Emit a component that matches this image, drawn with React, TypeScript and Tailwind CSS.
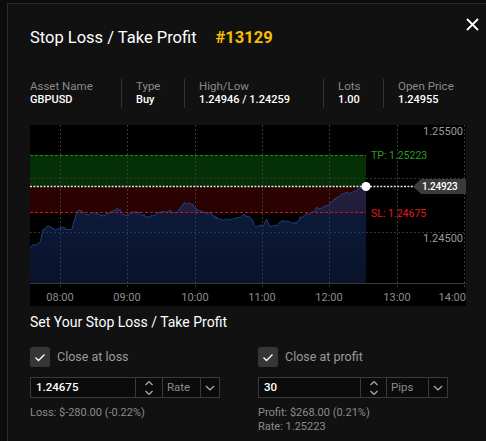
import React from "react";

const KEY: [number, number][] = [
  [30, 247], [40, 242], [43, 230], [47, 227], [52, 228], [57, 230], [62, 228], [67, 230], [72, 230],
  [74, 222], [77, 212], [80, 210], [83, 213], [87, 215], [93, 212], [97, 214], [103, 216], [107, 213],
  [113, 212], [117, 208], [120, 210], [123, 215], [127, 216], [130, 213], [137, 212], [143, 215],
  [150, 217], [157, 213], [163, 212], [170, 211], [177, 213], [182, 205], [187, 203], [193, 205],
  [197, 210], [203, 212], [210, 213], [217, 218], [223, 220], [233, 219], [240, 217], [245, 215],
  [250, 217], [253, 222], [257, 227], [263, 225], [267, 220], [270, 227], [277, 225], [283, 221],
  [290, 222], [297, 223], [300, 218], [307, 214], [313, 212], [317, 208], [323, 207], [327, 205],
  [330, 203], [337, 197], [343, 193], [350, 193], [357, 190], [363, 187], [366, 186],
];

function noise(i: number) {
  const v = Math.sin(i * 12.9898) * 43758.5453;
  return (v - Math.floor(v)) * 2 - 1;
}

function buildPoints() {
  const pts: [number, number][] = [];
  for (let k = 0; k < KEY.length - 1; k++) {
    const [x0, y0] = KEY[k];
    const [x1, y1] = KEY[k + 1];
    for (let x = x0; x < x1; x++) {
      const t = (x - x0) / (x1 - x0);
      const y = y0 + (y1 - y0) * t + noise(x) * 1.4;
      pts.push([x - 30, y - 125]);
    }
  }
  pts.push([336, 61.5]);
  return pts;
}

function Chart() {
  const pts = buildPoints();
  const line = pts.map((p, i) => `${i === 0 ? "M" : "L"}${p[0].toFixed(1)},${p[1].toFixed(1)}`).join(" ");
  const area = `${line} L336,158 L0,158 Z`;
  const vx = [30, 97, 165, 232, 299, 367, 434];
  const times = ["08:00", "09:00", "10:00", "11:00", "12:00", "13:00"];
  return (
    <div className="mt-[17px] h-[181px] w-[436px] bg-black">
      <svg width="436" height="181" viewBox="0 0 436 181" className="block">
        <defs>
          <linearGradient id="ag" x1="0" y1="0" x2="0" y2="1">
            <stop offset="0" stopColor="#1c3d80" stopOpacity="0.5" />
            <stop offset="1" stopColor="#163070" stopOpacity="0.38" />
          </linearGradient>
        </defs>
        <rect x="0" y="30" width="336" height="31.5" fill="#052f05" />
        <rect x="0" y="61.5" width="336" height="26" fill="#2a0202" />
        {vx.map((x) => (
          <line key={x} x1={x + 0.5} y1="0" x2={x + 0.5} y2="163" stroke="#3a3a3a" strokeWidth="1" strokeDasharray="2 2" />
        ))}
        <line x1="0" y1="53.5" x2="436" y2="53.5" stroke="#333" strokeDasharray="2 2" />
        <line x1="0" y1="107.5" x2="436" y2="107.5" stroke="#333" strokeDasharray="2 2" />
        <path d={area} fill="url(#ag)" />
        <path d={line} fill="none" stroke="#1f3f7e" strokeWidth="1" />
        <line x1="0" y1="30.5" x2="336" y2="30.5" stroke="#1d8a1d" strokeDasharray="3 2" />
        <line x1="0" y1="87.5" x2="336" y2="87.5" stroke="#cf1515" strokeDasharray="3 2" />
        <line x1="0" y1="61.5" x2="384" y2="61.5" stroke="#e6e6e6" strokeWidth="1.6" strokeDasharray="2 1.4" />
        <circle cx="336" cy="61.5" r="4.5" fill="#ffffff" />
        <polygon points="383,61.5 391,54 436,54 436,69 391,69" fill="#3b3b3b" />
        <text x="392" y="65.2" fill="#ffffff" fontSize="10" fontWeight="500" letterSpacing="-0.2">1.24923</text>
        <text x="341" y="34" fill="#2f9a22" fontSize="10.5">TP: 1.25223</text>
        <text x="341" y="91.5" fill="#e41d1d" fontSize="10.5">SL: 1.24675</text>
        <text x="433" y="10" fill="#9a9a9a" fontSize="11" textAnchor="end">1.25500</text>
        <text x="433" y="117" fill="#9a9a9a" fontSize="11" textAnchor="end">1.24500</text>
        <line x1="0" y1="158.5" x2="436" y2="158.5" stroke="#3a3a3a" />
        {times.map((t, i) => (
          <text key={t} x={vx[i]} y="176" fill="#8c8c8c" fontSize="11" textAnchor="middle">{t}</text>
        ))}
        <text x="436" y="176" fill="#8c8c8c" fontSize="11" textAnchor="end">14:00</text>
      </svg>
    </div>
  );
}

function Check() {
  return (
    <div className="flex h-[20px] w-[20px] items-center justify-center rounded-[2px] bg-[#363636]">
      <svg width="20" height="20" viewBox="0 0 20 20">
        <polyline points="5.5,10.5 8.5,13.5 14.5,7.5" fill="none" stroke="#ffffff" strokeWidth="1.3" />
      </svg>
    </div>
  );
}

function Spinner() {
  return (
    <svg width="10" height="18" viewBox="0 0 10 18">
      <polyline points="1.5,6 5,2.5 8.5,6" fill="none" stroke="#b0b0b0" strokeWidth="1.2" />
      <polyline points="1.5,12 5,15.5 8.5,12" fill="none" stroke="#b0b0b0" strokeWidth="1.2" />
    </svg>
  );
}

function Chevron() {
  return (
    <svg width="10" height="6" viewBox="0 0 10 6">
      <polyline points="1,1 5,5 9,1" fill="none" stroke="#b0b0b0" strokeWidth="1.2" />
    </svg>
  );
}

function Field({ value, unit, unitW, spinW }: { value: string; unit: string; unitW: string; spinW: string }) {
  return (
    <div className="flex h-[21px] w-[190px] border border-[#3a3a3a] bg-[#0b0b0b]">
      <div className="flex flex-1 items-center pl-[5px] text-[11.5px] font-medium text-white">{value}</div>
      <div className={`flex items-center justify-center border-l border-[#3a3a3a] ${spinW}`}>
        <Spinner />
      </div>
      <div className={`flex items-center border-l border-[#3a3a3a] pl-[4px] text-[11.5px] text-[#8a8a8a] ${unitW}`}>{unit}</div>
      <div className="flex w-[19px] items-center justify-center border-l border-[#3a3a3a]">
        <Chevron />
      </div>
    </div>
  );
}

function Info({ label, value, w, first }: { label: string; value: string; w: string; first?: boolean }) {
  return (
    <div className={`flex h-[29px] flex-col ${w} ${first ? "" : "border-l border-[#333] pl-[14px]"}`}>
      <div className="text-[11.5px] leading-[14px] text-[#8a8a8a]">{label}</div>
      <div className="text-[11px] font-medium leading-[14px] text-white">{value}</div>
    </div>
  );
}

export default function App() {
  return (
    <div className="h-[441px] w-[486px] overflow-hidden bg-[#0c0c0c] pt-[3px] font-['Roboto',sans-serif]">
      <div className="relative ml-[7px] h-[460px] w-[479px] border-l border-t border-[#2b2b2b] bg-[#111111] pl-[22px]">
        <button className="absolute left-[458px] top-[14px] h-[13px] w-[13px]">
          <svg width="13" height="13" viewBox="0 0 13 13">
            <line x1="1" y1="1" x2="12" y2="12" stroke="#ffffff" strokeWidth="1.8" />
            <line x1="12" y1="1" x2="1" y2="12" stroke="#ffffff" strokeWidth="1.8" />
          </svg>
        </button>
        <div className="flex items-center pt-[24px] text-[16.5px] leading-[20px]">
          <span className="text-white">Stop Loss / Take Profit</span>
          <span className="ml-[19px] font-bold text-[#f8bd00]">#13129</span>
        </div>
        <div className="mt-[31px] flex">
          <Info first label="Asset Name" value="GBPUSD" w="w-[91px]" />
          <Info label="Type" value="Buy" w="w-[63px]" />
          <Info label="High/Low" value="1.24946 / 1.24259" w="w-[139px]" />
          <Info label="Lots" value="1.00" w="w-[60px]" />
          <Info label="Open Price" value="1.24955" w="w-[90px]" />
        </div>
        <Chart />
        <div className="mt-[7px] text-[14px] leading-[18px] text-white">Set Your Stop Loss / Take Profit</div>
        <div className="mt-[16px] flex">
          <div className="w-[228px]">
            <div className="flex h-[20px] items-center">
              <Check />
              <span className="ml-[7px] text-[12.5px] text-[#9a9a9a]">Close at loss</span>
            </div>
            <div className="mt-[10px]">
              <Field value="1.24675" unit="Rate" unitW="w-[38px]" spinW="w-[27px]" />
            </div>
            <div className="mt-[8px] text-[11px] leading-[14px] text-[#8a8a8a]">Loss: $-280.00 (-0.22%)</div>
          </div>
          <div className="w-[190px]">
            <div className="flex h-[20px] items-center">
              <Check />
              <span className="ml-[7px] text-[12.5px] text-[#9a9a9a]">Close at profit</span>
            </div>
            <div className="mt-[10px]">
              <Field value="30" unit="Pips" unitW="w-[42px]" spinW="w-[26px]" />
            </div>
            <div className="mt-[8px] text-[11px] leading-[14px] text-[#8a8a8a]">
              <div>Profit: $268.00 (0.21%)</div>
              <div>Rate: 1.25223</div>
            </div>
          </div>
        </div>
      </div>
    </div>
  );
}
